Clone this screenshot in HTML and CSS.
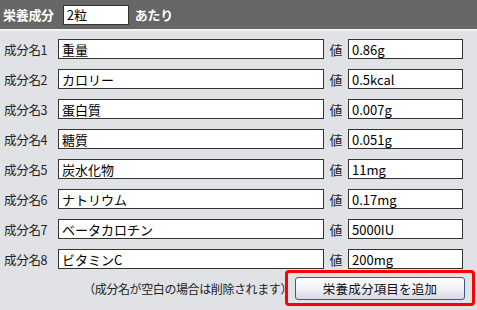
FILE: index.html
```html
<!DOCTYPE html>
<html lang="ja">
<head>
<meta charset="utf-8">
<link rel="stylesheet" href="styles.css">
</head>
<body>
<div class="panel">
  <div class="header">
    <span class="title">栄養成分</span>
    <input class="per" type="text" value="2粒">
    <span class="title">あたり</span>
  </div>
  <div class="rows">
    <label class="lbl">成分名1</label><input class="name" type="text" value="重量"><span class="val">値</span><input class="value" type="text" value="0.86g">
    <label class="lbl">成分名2</label><input class="name" type="text" value="カロリー"><span class="val">値</span><input class="value" type="text" value="0.5kcal">
    <label class="lbl">成分名3</label><input class="name" type="text" value="蛋白質"><span class="val">値</span><input class="value" type="text" value="0.007g">
    <label class="lbl">成分名4</label><input class="name" type="text" value="糖質"><span class="val">値</span><input class="value" type="text" value="0.051g">
    <label class="lbl">成分名5</label><input class="name" type="text" value="炭水化物"><span class="val">値</span><input class="value" type="text" value="11mg">
    <label class="lbl">成分名6</label><input class="name" type="text" value="ナトリウム"><span class="val">値</span><input class="value" type="text" value="0.17mg">
    <label class="lbl">成分名7</label><input class="name" type="text" value="ベータカロチン"><span class="val">値</span><input class="value" type="text" value="5000IU">
    <label class="lbl">成分名8</label><input class="name" type="text" value="ビタミンC"><span class="val">値</span><input class="value" type="text" value="200mg">
  </div>
  <div class="footer">
    <span class="note">（成分名が空白の場合は削除されます）</span>
    <span class="btn-wrap"><button class="add" type="button">栄養成分項目を追加</button></span>
  </div>
</div>
</body>
</html>
```
FILE: styles.css
```css
html, body {
  margin: 0;
  padding: 0;
  background: #e1e2e6;
  font-family: "Noto Sans CJK JP", "Liberation Sans", sans-serif;
  font-size: 13px;
  color: #111;
}
.panel {
  width: 477px;
  height: 310px;
  overflow: hidden;
}
.header {
  height: 29px;
  background: #666666;
  border-bottom: 2px solid #f2f2f2;
  display: flex;
  align-items: center;
  padding-left: 3px;
  box-sizing: content-box;
}
.title {
  color: #fff;
  font-weight: bold;
  font-size: 13px;
  letter-spacing: -0.3px;
}
input {
  font-family: "Noto Sans CJK JP", "Liberation Sans", sans-serif;
  font-size: 13px;
  color: #000;
  background: #fff;
  border: 1px solid #333;
  box-sizing: border-box;
  height: 20px;
  padding: 0 3px;
  margin: 0;
  outline: none;
}
.per {
  width: 66px;
  margin: 0 6px 0 9px;
}
.rows {
  display: grid;
  grid-template-columns: 54px 266px 24px 115px;
  grid-auto-rows: 20px;
  row-gap: 10px;
  align-items: center;
  padding: 8px 0 0 4px;
}
.lbl {
  font-size: 12.5px;
  color: #222;
  letter-spacing: -0.3px;
}
.val {
  text-align: center;
  font-size: 13px;
  color: #222;
}
.footer {
  display: flex;
  justify-content: flex-end;
  align-items: center;
  padding: 8px 12px 0 0;
}
.note {
  font-size: 12px;
  color: #222;
  margin-right: 3px;
  letter-spacing: -0.4px;
}
.btn-wrap {
  position: relative;
  display: inline-block;
}
.btn-wrap::after {
  content: "";
  position: absolute;
  top: -7px;
  left: -10px;
  right: -10px;
  bottom: -6px;
  border: 3px solid #ff0000;
  border-radius: 4px;
  pointer-events: none;
}
.add {
  display: block;
  width: 170px;
  height: 23px;
  border: 1px solid #3b5a86;
  border-radius: 3px;
  background: linear-gradient(#ffffff, #f1f1f7 50%, #d6d6e6);
  font-family: "Noto Sans CJK JP", "Liberation Sans", sans-serif;
  font-size: 12.5px;
  color: #111;
  padding: 0;
  letter-spacing: 0.2px;
}
```
